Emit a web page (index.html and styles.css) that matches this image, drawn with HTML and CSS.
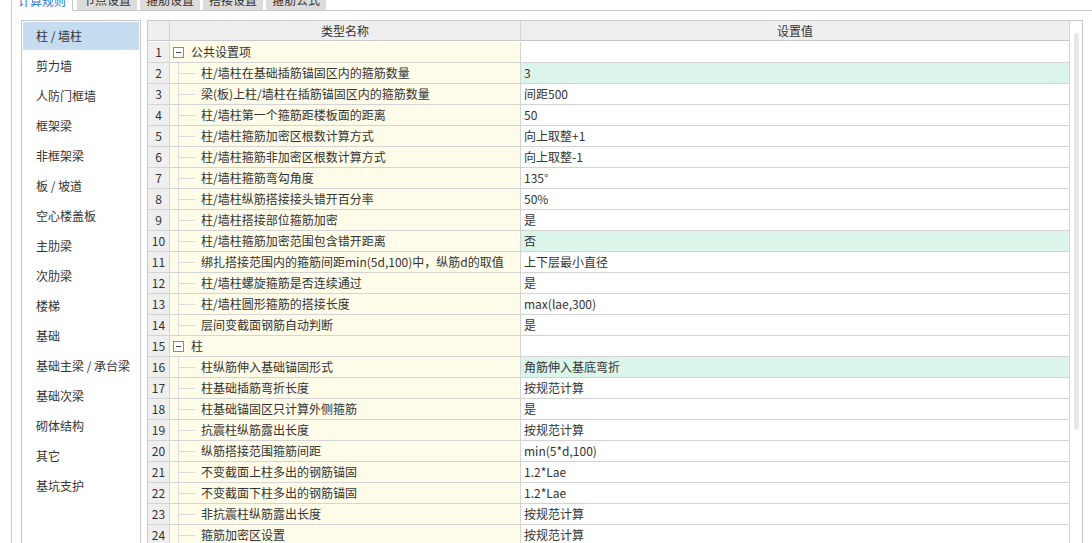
FILE: index.html
```html
<!DOCTYPE html>
<html lang="zh-CN">
<head>
<meta charset="utf-8">
<title>计算规则</title>
<link rel="stylesheet" href="styles.css">
</head>
<body>
<div class="tabs">
  <div class="tab active">计算规则</div>
  <div class="tab">节点设置</div>
  <div class="tab">箍筋设置</div>
  <div class="tab">搭接设置</div>
  <div class="tab">箍筋公式</div>
</div>
<div class="panel">
  <ul class="side">
    <li class="side-item selected">柱 / 墙柱</li>
    <li class="side-item">剪力墙</li>
    <li class="side-item">人防门框墙</li>
    <li class="side-item">框架梁</li>
    <li class="side-item">非框架梁</li>
    <li class="side-item">板 / 坡道</li>
    <li class="side-item">空心楼盖板</li>
    <li class="side-item">主肋梁</li>
    <li class="side-item">次肋梁</li>
    <li class="side-item">楼梯</li>
    <li class="side-item">基础</li>
    <li class="side-item">基础主梁 / 承台梁</li>
    <li class="side-item">基础次梁</li>
    <li class="side-item">砌体结构</li>
    <li class="side-item">其它</li>
    <li class="side-item">基坑支护</li>
  </ul>
  <div class="table-wrap">
    <div class="grid">
      <div class="hcell"></div><div class="hcell">类型名称</div><div class="hcell">设置值</div>

      <div class="num">1</div><div class="name parent"><span class="toggle"></span>公共设置项</div><div class="val"></div>
      <div class="num">2</div><div class="name child">柱/墙柱在基础插筋锚固区内的箍筋数量</div><div class="val hl">3</div>
      <div class="num">3</div><div class="name child">梁(板)上柱/墙柱在插筋锚固区内的箍筋数量</div><div class="val">间距500</div>
      <div class="num">4</div><div class="name child">柱/墙柱第一个箍筋距楼板面的距离</div><div class="val">50</div>
      <div class="num">5</div><div class="name child">柱/墙柱箍筋加密区根数计算方式</div><div class="val">向上取整+1</div>
      <div class="num">6</div><div class="name child">柱/墙柱箍筋非加密区根数计算方式</div><div class="val">向上取整-1</div>
      <div class="num">7</div><div class="name child">柱/墙柱箍筋弯勾角度</div><div class="val">135°</div>
      <div class="num">8</div><div class="name child">柱/墙柱纵筋搭接接头错开百分率</div><div class="val">50%</div>
      <div class="num">9</div><div class="name child">柱/墙柱搭接部位箍筋加密</div><div class="val">是</div>
      <div class="num">10</div><div class="name child">柱/墙柱箍筋加密范围包含错开距离</div><div class="val hl">否</div>
      <div class="num">11</div><div class="name child">绑扎搭接范围内的箍筋间距min(5d,100)中，纵筋d的取值</div><div class="val">上下层最小直径</div>
      <div class="num">12</div><div class="name child">柱/墙柱螺旋箍筋是否连续通过</div><div class="val">是</div>
      <div class="num">13</div><div class="name child">柱/墙柱圆形箍筋的搭接长度</div><div class="val">max(lae,300)</div>
      <div class="num">14</div><div class="name child">层间变截面钢筋自动判断</div><div class="val">是</div>
      <div class="num">15</div><div class="name parent"><span class="toggle"></span>柱</div><div class="val"></div>
      <div class="num">16</div><div class="name child">柱纵筋伸入基础锚固形式</div><div class="val hl">角筋伸入基底弯折</div>
      <div class="num">17</div><div class="name child">柱基础插筋弯折长度</div><div class="val">按规范计算</div>
      <div class="num">18</div><div class="name child">柱基础锚固区只计算外侧箍筋</div><div class="val">是</div>
      <div class="num">19</div><div class="name child">抗震柱纵筋露出长度</div><div class="val">按规范计算</div>
      <div class="num">20</div><div class="name child">纵筋搭接范围箍筋间距</div><div class="val">min(5*d,100)</div>
      <div class="num">21</div><div class="name child">不变截面上柱多出的钢筋锚固</div><div class="val">1.2*Lae</div>
      <div class="num">22</div><div class="name child">不变截面下柱多出的钢筋锚固</div><div class="val">1.2*Lae</div>
      <div class="num">23</div><div class="name child">非抗震柱纵筋露出长度</div><div class="val">按规范计算</div>
      <div class="num">24</div><div class="name child">箍筋加密区设置</div><div class="val">按规范计算</div>
    </div>
    <div class="vscroll"><div class="thumb"></div></div>
  </div>
</div>
</body>
</html>
```
FILE: styles.css
```css
html, body {
  margin: 0;
  padding: 0;
  height: 543px;
  overflow: hidden;
  background: #ffffff;
}

body {
  font-family: "Noto Sans CJK SC", "Noto Sans", "DejaVu Sans", sans-serif;
  font-size: 12px;
  color: #333333;
}

.tabs {
  display: flex;
  align-items: flex-end;
  gap: 3px;
  margin: -14px 0 0 11px;
  border-bottom: 1px solid #c9c9c9;
  height: 24px;
}

.tab {
  box-sizing: border-box;
  width: 60px;
  height: 24px;
  padding-top: 6px;
  line-height: 16px;
  text-align: center;
  background: #dcdcdc;
  color: #333333;
}

.tab.active {
  width: 62px;
  height: 25px;
  margin-bottom: -1px;
  margin-right: 1px;
  background: #ffffff;
  border: 1px solid #c9c9c9;
  border-bottom: none;
  color: #2b7cd3;
}

.panel {
  display: flex;
  align-items: flex-start;
  margin-left: 11px;
  border-left: 1px solid #c9c9c9;
  padding: 9px 0 0 9px;
  height: 600px;
}

.side {
  list-style: none;
  margin: 0;
  padding: 1px;
  box-sizing: border-box;
  width: 120px;
  height: 600px;
  flex: none;
  border: 1px solid #c9c9c9;
}

.side-item {
  height: 28px;
  line-height: 28px;
  margin-bottom: 2px;
  padding-left: 12px;
  margin-left: 1px;
  white-space: nowrap;
}

.side-item.selected {
  margin-left: 0;
  padding-left: 13px;
  background: #c6dcf1;
}

.table-wrap {
  display: flex;
  flex: none;
  margin-left: 6px;
  border: 1px solid #c9c9c9;
  border-bottom: none;
  height: 600px;
}

.grid {
  display: grid;
  grid-template-columns: 22px 351px 549px;
  grid-auto-rows: 21px;
  align-content: start;
  width: 922px;
}

.grid > div {
  box-sizing: border-box;
  border-right: 1px solid #d4d4d4;
  border-bottom: 1px solid #d4d4d4;
  line-height: 20px;
  white-space: nowrap;
  overflow: hidden;
}

.grid > .hcell {
  height: 20px;
  line-height: 19px;
  background: #efefef;
  text-align: center;
  border-bottom-color: #c9c9c9;
}

.num {
  background: #efefef;
  text-align: center;
}

.name {
  background-color: #fffce9;
}

.name.parent {
  padding-left: 3px;
  display: flex;
  align-items: center;
}

.toggle {
  box-sizing: border-box;
  width: 11px;
  height: 11px;
  border: 1px solid #8a8a8a;
  background: linear-gradient(#444444, #444444) center / 5px 1px no-repeat, #ffffff;
  margin-right: 7px;
  flex: none;
}

.name.child {
  padding-left: 31px;
  background:
    linear-gradient(#dcdcdc, #dcdcdc) 8px 0 / 1px 100% no-repeat,
    linear-gradient(#dcdcdc, #dcdcdc) 9px 10px / 16px 1px no-repeat,
    #fffce9;
}

.val {
  padding-left: 3px;
  background: #ffffff;
}

.val.hl {
  background: #dcf5eb;
}

.vscroll {
  box-sizing: border-box;
  width: 12px;
  flex: none;
  padding: 12px 0 0 4px;
}

.thumb {
  width: 5px;
  height: 397px;
  border-radius: 3px;
  background: #e7e7e7;
}
```
